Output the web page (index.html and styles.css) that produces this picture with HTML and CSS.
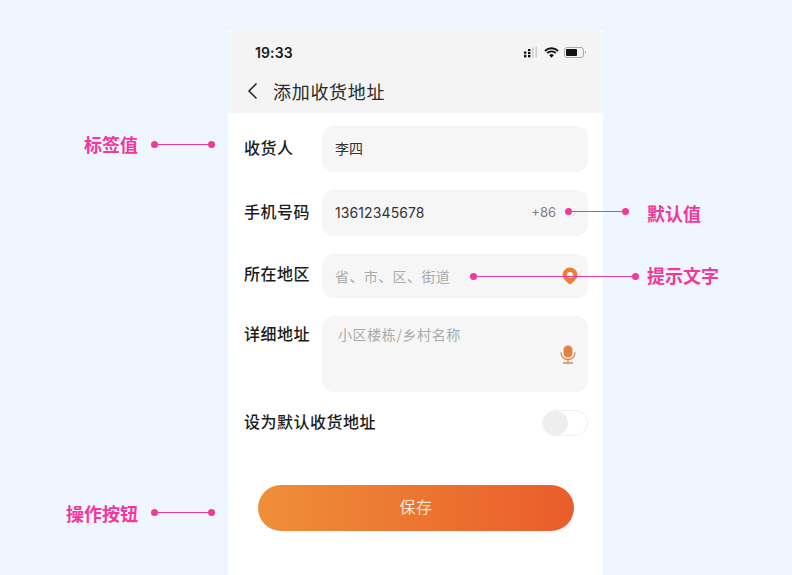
FILE: index.html
```html
<!DOCTYPE html>
<html lang="zh-CN">
<head>
  <meta charset="UTF-8" />
  <meta name="viewport" content="width=device-width, initial-scale=1" />
  <title>添加收货地址</title>
  <link rel="stylesheet" href="styles.css">
</head>
<body>
  <div class="stage">
    <div class="phone">
      <div class="top-bar">
        <div class="status">
          <span class="time">19:33</span>
          <div class="status-icons">
            <svg width="16" height="12" viewBox="0 0 16 12">
              <g fill="#111">
                <rect x="1" y="5.5" width="2.4" height="2.2"/><rect x="1" y="8.8" width="2.4" height="2.6"/>
                <rect x="5" y="3" width="2.4" height="2.2"/><rect x="5" y="6" width="2.4" height="2.2"/><rect x="5" y="9" width="2.4" height="2.4"/>
              </g>
              <g fill="#cfcfcf">
                <rect x="9" y="1.5" width="1.6" height="10"/><rect x="12.4" y="0.5" width="1.6" height="11"/>
              </g>
            </svg>
            <svg width="15" height="11" viewBox="0 0 15 11">
              <path d="M1 4 A9 9 0 0 1 14 4 M3.2 6.2 A6 6 0 0 1 11.8 6.2" fill="none" stroke="#111" stroke-width="1.9"/>
              <path d="M7.5 10.8 L5.2 8.3 A3.2 3.2 0 0 1 9.8 8.3 Z" fill="#111"/>
            </svg>
            <svg width="23" height="11" viewBox="0 0 23 11">
              <rect x="0.5" y="0.5" width="19" height="10" rx="2.5" fill="none" stroke="#aaa"/>
              <rect x="2" y="2" width="11" height="7" rx="1" fill="#111"/>
              <path d="M21 3.8 a2 2 0 0 1 0 3.4 z" fill="#aaa"/>
            </svg>
          </div>
        </div>
        <div class="nav">
          <svg class="back" width="11" height="18" viewBox="0 0 11 18">
            <path d="M9.5 1.5 L2 9 L9.5 16.5" fill="none" stroke="#222" stroke-width="1.5"/>
          </svg>
          <span class="nav-title">添加收货地址</span>
        </div>
      </div>

      <div class="form">
        <div class="row">
          <label class="label">收货人</label>
          <div class="field field-name"><span class="value">李四</span></div>
        </div>
        <div class="row">
          <label class="label">手机号码</label>
          <div class="field field-phone">
            <span class="value value-num">13612345678</span>
            <span class="code">+86</span>
            <svg class="chevron" width="5" height="9" viewBox="0 0 5 9">
              <path d="M1 1 L4 4.5 L1 8" fill="none" stroke="#ccc" stroke-width="1"/>
            </svg>
          </div>
        </div>
        <div class="row">
          <label class="label label-area">所在地区</label>
          <div class="field field-area">
            <span class="hint">省、市、区、街道</span>
            <svg class="pin" width="16" height="18" viewBox="0 0 16 18">
              <path fill-rule="evenodd" d="M8 0.5 A7.5 7.5 0 0 1 15.5 8 C15.5 11.5 11 15.5 8 17.5 C5 15.5 0.5 11.5 0.5 8 A7.5 7.5 0 0 1 8 0.5 Z M8 5 A3 3 0 1 0 8 11 A3 3 0 1 0 8 5 Z" fill="#e9803a"/>
            </svg>
          </div>
        </div>
        <div class="row row-top">
          <label class="label">详细地址</label>
          <div class="field field-detail">
            <span class="hint hint-detail">小区楼栋/乡村名称</span>
            <svg class="mic" width="16" height="19" viewBox="0 0 16 19">
              <rect x="3.5" y="0.5" width="9" height="12" rx="4.5" fill="#e08347"/>
              <path d="M1 7.5 A7 7 0 0 0 15 7.5 M8 14.5 V17.5 M3 18 H13" fill="none" stroke="#e08347" stroke-width="1.3"/>
            </svg>
          </div>
        </div>
        <div class="row-switch">
          <span class="label label-wide">设为默认收货地址</span>
          <div class="switch"><span class="knob"></span></div>
        </div>
        <button class="save">保存</button>
      </div>
    </div>

    <!-- 标注 -->
    <span class="tag tag-label">标签值</span>
    <span class="line line-label"></span>
    <span class="tag tag-default">默认值</span>
    <span class="line line-default"></span>
    <span class="tag tag-hint">提示文字</span>
    <span class="line line-hint"></span>
    <span class="tag tag-action">操作按钮</span>
    <span class="line line-action"></span>
  </div>
</body>
</html>
```

FILE: styles.css
```css
* {
  box-sizing: border-box;
}
body {
  margin: 0;
  background: #eff6ff;
  font-family: "Inter", "Noto Sans CJK SC", sans-serif;
}
.stage {
  position: relative;
  height: 575px;
  overflow: hidden;
  padding: 30px 0 0 228px;
}
.phone {
  width: 375px;
  height: 545px;
  background: #fff;
}
.top-bar {
  height: 83px;
  background: #f4f4f4;
  border-radius: 6px 6px 0 0;
}
.status {
  height: 44px;
  padding: 0 16px 0 27px;
  display: flex;
  align-items: center;
  justify-content: space-between;
}
.time {
  font-size: 14px;
  font-weight: 600;
  letter-spacing: 0.1px;
  color: #1a1a1a;
}
.status-icons {
  display: flex;
  align-items: center;
  gap: 5px;
}
.nav {
  height: 33px;
  padding-left: 19px;
  display: flex;
  align-items: center;
}
.back {
  margin-right: 15px;
}
.nav-title {
  font-family: "Noto Sans CJK SC", sans-serif;
  font-size: 18px;
  color: #2a2a2a;
  letter-spacing: 0.7px;
}
.form {
  padding: 13px 15px 0 17px;
}
.row {
  display: flex;
  align-items: center;
  margin-bottom: 18px;
}
.row-top {
  align-items: flex-start;
}
.label {
  width: 77px;
  flex: none;
  margin-left: -1px;
  margin-right: 1px;
  padding-bottom: 4px;
  font-family: "Noto Sans CJK SC", sans-serif;
  font-size: 16px;
  font-weight: 500;
  line-height: 22px;
  letter-spacing: 0.5px;
  color: #1c1c1c;
}
.label-area {
  padding-bottom: 6px;
}
.row-top .label {
  margin-top: 6px;
}
.label-wide {
  width: auto;
}
.field {
  flex: 1;
  height: 46px;
  padding: 0 13px 2px;
  background: #f6f6f6;
  border-radius: 12px;
  display: flex;
  align-items: center;
}
.field-area {
  height: 44px;
  padding-bottom: 0;
}
.field-detail {
  position: relative;
  height: 76px;
  align-items: flex-start;
  padding: 8px 16px;
}
.value {
  font-family: "Noto Sans CJK SC", sans-serif;
  font-size: 14px;
  color: #333;
}
.value-num {
  font-family: "Inter", sans-serif;
  flex: 1;
  letter-spacing: 0.1px;
}
.code {
  font-size: 13px;
  color: #808080;
}
.chevron {
  margin-left: 16px;
  margin-right: -2px;
}
.hint {
  flex: 1;
  font-family: "Noto Sans CJK SC", sans-serif;
  font-size: 14px;
  letter-spacing: 0.4px;
  color: #aaa;
}
.hint-detail {
  letter-spacing: 0.6px;
}
.pin {
  margin-right: -3px;
}
.mic {
  position: absolute;
  right: 12px;
  top: 29px;
}
.row-switch {
  display: flex;
  align-items: center;
  justify-content: space-between;
  height: 26px;
}
.switch {
  width: 46px;
  height: 26px;
  background: #fff;
  border: 1px solid #efefef;
  border-radius: 13px;
}
.knob {
  display: block;
  width: 25px;
  height: 24px;
  background: #eeeeee;
  border-radius: 50%;
}
.save {
  display: block;
  width: 316px;
  height: 46px;
  margin: 49px 0 0 13px;
  padding: 0 0 4px;
  border: none;
  border-radius: 23px;
  background: linear-gradient(90deg, #ef8f38, #ea5c2b);
  font-family: "Noto Sans CJK SC", sans-serif;
  font-size: 16px;
  color: #fbe6d6;
  letter-spacing: 0.5px;
}

/* 标注 */
.tag {
  position: absolute;
  font-family: "Noto Sans CJK SC", sans-serif;
  font-size: 18px;
  font-weight: 700;
  line-height: 24px;
  color: #f3389a;
}
.line {
  position: absolute;
  height: 1px;
  background: #ec3a94;
}
.line::before,
.line::after {
  content: "";
  position: absolute;
  top: -3px;
  width: 7px;
  height: 7px;
  border-radius: 50%;
  background: #f3389a;
}
.line::before {
  left: -3px;
}
.line::after {
  right: -3px;
}
.tag-label { left: 84px; top: 132px; }
.line-label { left: 154px; top: 144px; width: 58px; }
.tag-default { left: 647px; top: 201px; }
.line-default { left: 568px; top: 211px; width: 58px; }
.tag-hint { left: 647px; top: 263px; }
.line-hint { left: 473px; top: 276px; width: 163px; }
.tag-action { left: 66px; top: 501px; }
.line-action { left: 154px; top: 512px; width: 58px; }
```
